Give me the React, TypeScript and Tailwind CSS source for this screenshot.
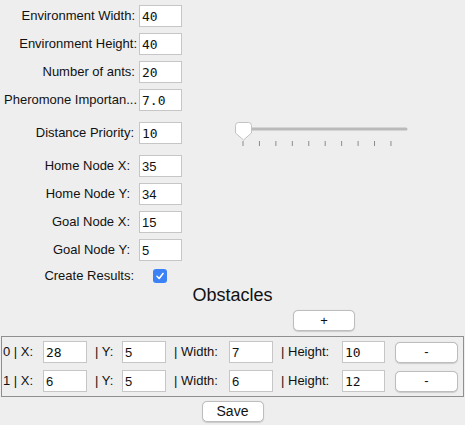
import React from "react";

const sans = { fontFamily: '"Liberation Sans", Arial, sans-serif' };

type Field = { label: string; value: string; pr: string; mono?: boolean };

const topFields: Field[] = [
  { label: "Environment Width:", value: "40", pr: "pr-[4px]", mono: true },
  { label: "Environment Height:", value: "40", pr: "pr-[2px]", mono: true },
  { label: "Number of ants:", value: "20", pr: "pr-[4px]", mono: true },
  { label: "Pheromone Importan...", value: "7.0", pr: "pr-[2px]", mono: true },
];

const nodeFields: Field[] = [
  { label: "Home Node X:", value: "35", pr: "pr-[9px]" },
  { label: "Home Node Y:", value: "34", pr: "pr-[9px]" },
  { label: "Goal Node X:", value: "15", pr: "pr-[9px]" },
  { label: "Goal Node Y:", value: "5", pr: "pr-[9px]" },
];

const obstacles = [
  { x: "28", y: "5", w: "7", h: "10" },
  { x: "6", y: "5", w: "6", h: "12" },
];

function Box({ value, mono, w = "w-[43px]" }: { value: string; mono?: boolean; w?: string }) {
  return (
    <div
      className={`${w} h-[22px] shrink-0 bg-white border border-[#c6c6c6] px-[2px] flex items-center text-[13px] text-[#111] leading-none`}
      style={mono ? { fontFamily: '"DejaVu Sans Mono", monospace' } : sans}
    >
      {value}
    </div>
  );
}

function Row({ f }: { f: Field }) {
  return (
    <div className="flex items-center h-[22px]">
      <div className={`w-[139px] text-right text-[13px] whitespace-nowrap ${f.pr}`}>{f.label}</div>
      <Box value={f.value} mono={f.mono} />
    </div>
  );
}

function Slider() {
  const ticks = Array.from({ length: 10 }, (_, i) => 10 + i * 16.44);
  return (
    <svg width="176" height="22" className="overflow-visible ml-[51px] self-start">
      <line x1="5" y1="7" x2="173" y2="7" stroke="#bababa" strokeWidth="3" strokeLinecap="round" />
      {ticks.map((x, i) => (
        <line key={i} x1={x} y1="19" x2={x} y2="24" stroke="#8c8c8c" strokeWidth="1" />
      ))}
      <path
        d="M5.5 0.5 H15.5 Q18.5 0.5 18.5 3.5 V11 L10.5 18 L2.5 11 V3.5 Q2.5 0.5 5.5 0.5 Z"
        fill="#ffffff"
        stroke="#c2c2c2"
        strokeWidth="1"
      />
    </svg>
  );
}

function Btn({ children, w }: { children: React.ReactNode; w: string }) {
  return (
    <div
      className={`${w} h-[21px] bg-white border border-[#bdbdbd] rounded-[5px] flex items-center justify-center text-[13px] text-[#111] shadow-[0_0.5px_1px_rgba(0,0,0,0.15)]`}
    >
      {children}
    </div>
  );
}

export default function App() {
  return (
    <div className="w-[465px] h-[425px] bg-[#eeeeee] text-[#111] overflow-hidden" style={sans}>
      <div className="flex flex-col gap-[6px] pt-[5px]">
        {topFields.map((f) => (
          <Row key={f.label} f={f} />
        ))}
        <div className="flex items-center h-[22px] my-[5px]">
          <div className="w-[139px] text-right text-[13px] pr-[5px]">Distance Priority:</div>
          <Box value="10" mono />
          <Slider />
        </div>
        {nodeFields.map((f) => (
          <Row key={f.label} f={f} />
        ))}
      </div>

      <div className="flex items-center mt-[8px] h-[14px]">
        <div className="w-[139px] text-right text-[13px] pr-[5px]">Create Results:</div>
        <div className="ml-[14px] w-[14px] h-[14px] rounded-[3px] bg-[#3b82f6] flex items-center justify-center">
          <svg width="10" height="10" viewBox="0 0 10 10">
            <path d="M2 5.3 L4.2 7.5 L8 2.5" fill="none" stroke="#fff" strokeWidth="1.6" strokeLinecap="round" strokeLinejoin="round" />
          </svg>
        </div>
      </div>

      <div className="mt-[2px] h-[21px] text-[18px] leading-[21px] text-center">Obstacles</div>

      <div className="mt-[4px] ml-[293px]">
        <Btn w="w-[62px]">+</Btn>
      </div>

      <div className="mt-[5px] mx-[1px] border border-[#8f8f8f] pt-[4px] pb-[4px] flex flex-col gap-[7px]">
        {obstacles.map((o, i) => (
          <div key={i} className="flex items-center h-[22px] text-[13px] whitespace-nowrap">
            <div className="w-[41px] pl-[1px]">{i} | X:</div>
            <Box value={o.x} mono={i === 0} w="w-[44px]" />
            <div className="w-[35px] pl-[8px]">| Y:</div>
            <Box value={o.y} w="w-[44px]" />
            <div className="w-[63px] pl-[8px]">| Width:</div>
            <Box value={o.w} w="w-[44px]" />
            <div className="w-[69px] pl-[8px]">| Height:</div>
            <Box value={o.h} mono />
            <div className="ml-[10px]">
              <Btn w="w-[63px]">-</Btn>
            </div>
          </div>
        ))}
      </div>

      <div className="mt-[4px] flex justify-center">
        <Btn w="w-[62px]">
          <span className="text-[14px]">Save</span>
        </Btn>
      </div>
    </div>
  );
}
